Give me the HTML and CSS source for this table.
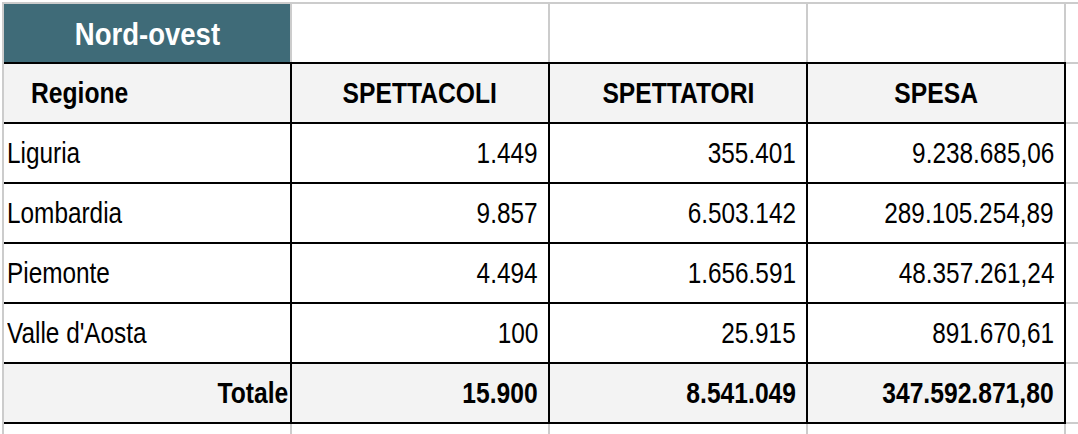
FILE: index.html
```html
<!DOCTYPE html>
<html lang="it">
<head>
<meta charset="utf-8">
<title>Nord-ovest</title>
<link rel="stylesheet" href="styles.css">
</head>
<body>
<div class="sheet">
  <div class="cell title"><span class="t">Nord-ovest</span></div>
  <div class="cell"></div>
  <div class="cell"></div>
  <div class="cell"></div>
  <div class="cell"></div>

  <div class="table">
    <div class="th th-left"><span class="t">Regione</span></div>
    <div class="th"><span class="t">SPETTACOLI</span></div>
    <div class="th"><span class="t">SPETTATORI</span></div>
    <div class="th"><span class="t">SPESA</span></div>

    <div class="td td-left"><span class="t">Liguria</span></div>
    <div class="td num"><span class="t">1.449</span></div>
    <div class="td num"><span class="t">355.401</span></div>
    <div class="td num"><span class="t">9.238.685,06</span></div>

    <div class="td td-left"><span class="t">Lombardia</span></div>
    <div class="td num"><span class="t">9.857</span></div>
    <div class="td num"><span class="t">6.503.142</span></div>
    <div class="td num"><span class="t">289.105.254,89</span></div>

    <div class="td td-left"><span class="t">Piemonte</span></div>
    <div class="td num"><span class="t">4.494</span></div>
    <div class="td num"><span class="t">1.656.591</span></div>
    <div class="td num"><span class="t">48.357.261,24</span></div>

    <div class="td td-left"><span class="t">Valle d'Aosta</span></div>
    <div class="td num"><span class="t">100</span></div>
    <div class="td num"><span class="t">25.915</span></div>
    <div class="td num"><span class="t">891.670,61</span></div>

    <div class="td total total-label"><span class="t">Totale</span></div>
    <div class="td total num"><span class="t">15.900</span></div>
    <div class="td total num"><span class="t">8.541.049</span></div>
    <div class="td total num"><span class="t">347.592.871,80</span></div>
  </div>

  <div class="cell"></div>
  <div class="cell"></div>
  <div class="cell"></div>
  <div class="cell"></div>
  <div class="cell"></div>
  <div class="cell"></div>

  <div class="cell"></div>
  <div class="cell"></div>
  <div class="cell"></div>
  <div class="cell"></div>
  <div class="cell"></div>
</div>
</body>
</html>
```

FILE: styles.css
```css
html, body {
  margin: 0;
  padding: 0;
  background: #ffffff;
  overflow: hidden;
}

body {
  width: 1078px;
  height: 434px;
  font-family: "Liberation Sans", Arial, sans-serif;
  color: #000000;
}

.sheet {
  box-sizing: border-box;
  margin: 2px 0 0 2px;
  padding: 2px 0 0 2px;
  height: 432px;
  display: grid;
  grid-template-columns: 286px 256px 256px 256px 1fr;
  grid-template-rows: 58px repeat(6, 58px) 1fr;
  gap: 2px;
  background: #cccccc;
}

.cell {
  background: #ffffff;
}

/* narrow (Arial Narrow-like) rendering of Liberation Sans */
.t {
  display: inline-block;
  transform: scaleX(0.84);
  transform-origin: center;
  white-space: nowrap;
}

.title {
  background: #3f6b78;
  color: #ffffff;
  font-weight: bold;
  font-size: 32px;
  line-height: 1;
  display: flex;
  align-items: center;
  justify-content: center;
  padding-top: 2px;
  box-sizing: border-box;
}

.title .t {
  transform: scaleX(0.86);
}

.table {
  grid-column: 1 / 5;
  grid-row: 2 / 8;
  margin: -2px -2px -2px 0;
  padding: 2px 2px 2px 0;
  background: #000000;
  display: grid;
  grid-template-columns: 286px 256px 256px 256px;
  grid-template-rows: repeat(6, 58px);
  gap: 2px;
}

.th, .td {
  display: flex;
  align-items: center;
  font-size: 29px;
  line-height: 1;
  white-space: nowrap;
  box-sizing: border-box;
  padding-top: 1px;
}

.th {
  background: #f3f3f3;
  font-weight: bold;
  justify-content: center;
}

.th .t,
.total .t {
  transform: scaleX(0.85);
}

.th-left {
  justify-content: flex-start;
  padding-left: 27px;
}

.th-left .t,
.td-left .t {
  transform-origin: left center;
}

.td {
  background: #ffffff;
}

.td-left {
  justify-content: flex-start;
  padding-left: 3px;
}

.num {
  justify-content: flex-end;
  padding-right: 10px;
}

.num .t,
.total-label .t {
  transform-origin: right center;
}

.total {
  background: #f3f3f3;
  font-weight: bold;
}

.total-label {
  justify-content: flex-end;
  padding-right: 2px;
}
```
